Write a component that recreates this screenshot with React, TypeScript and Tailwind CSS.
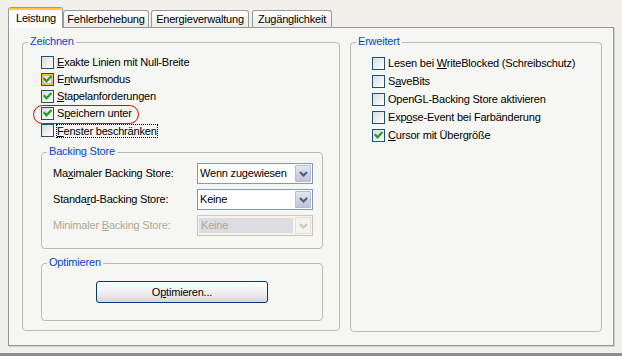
import React from 'react'

const PANEL_BG = 'bg-[#f6f6f3]'

function Check({ checked, hover }: { checked?: boolean; hover?: boolean }) {
  return (
    <span className="relative w-[13px] h-[13px] shrink-0 border border-[#1c5180] bg-gradient-to-br from-[#dcdcd7] to-[#ffffff]">
      {hover && <span className="absolute inset-0 border-2 border-[#f8b84a]" />}
      {checked && (
        <svg width="11" height="11" viewBox="0 0 11 11" className="absolute left-0 top-0">
          <path d="M2.5 5 L4.5 7.3 L8.7 2.8" fill="none" stroke="#21a121" strokeWidth="2.2" strokeLinecap="square" />
        </svg>
      )}
    </span>
  )
}

function Key({ text, at }: { text: string; at: number }) {
  return (
    <>
      {text.slice(0, at)}
      <span className="underline underline-offset-[1px]">{text[at]}</span>
      {text.slice(at + 1)}
    </>
  )
}

function Row({ children, checked, hover, h = 'h-[17px]' }: { children: React.ReactNode; checked?: boolean; hover?: boolean; h?: string }) {
  return (
    <div className={`relative flex items-center ${h}`}>
      <Check checked={checked} hover={hover} />
      <span className="ml-[3px] leading-[13px] whitespace-nowrap">{children}</span>
    </div>
  )
}

function Group({ title, className, children }: { title: string; className?: string; children?: React.ReactNode }) {
  return (
    <div className={`relative border border-[#bcbcb4] rounded-[4px] ${className ?? ''}`}>
      <span className={`absolute left-[5px] -top-[8px] px-[2px] leading-[13px] text-[#0046d5] ${PANEL_BG}`}>{title}</span>
      {children}
    </div>
  )
}

function Chevron({ color }: { color: string }) {
  return (
    <svg width="9" height="6" viewBox="0 0 9 6">
      <path d="M1 1 L4.5 4.5 L8 1" fill="none" stroke={color} strokeWidth="2.2" />
    </svg>
  )
}

function Combo({ value, disabled }: { value: string; disabled?: boolean }) {
  if (disabled) {
    return (
      <div className="flex w-[116px] h-[21px] border border-[#c9c7ba] bg-[#f4f3ee]">
        <div className="flex-1 my-[2px] ml-[1px] pl-[2px] flex items-center bg-[#dcdce2] text-[#aca899] leading-[13px]">{value}</div>
        <div className="w-[16px] my-[1px] mr-[1px] ml-[2px] flex items-center justify-center border border-[#e2e1da] bg-[#f4f3ee]">
          <Chevron color="#c9c7ba" />
        </div>
      </div>
    )
  }
  return (
    <div className="flex w-[116px] h-[21px] border border-[#7f9db9] bg-white">
      <div className="flex-1 pl-[2px] flex items-center leading-[13px]">{value}</div>
      <div className="w-[16px] my-[1px] mr-[1px] flex items-center justify-center border border-[#b6bcd4] rounded-[1px] bg-gradient-to-b from-[#e4e6f2] to-[#c0c2d6]">
        <Chevron color="#4d6185" />
      </div>
    </div>
  )
}

function Tab({ label, w, ml }: { label: string; w: string; ml?: string }) {
  return (
    <div className={`${w} ${ml ?? ''} h-[17px] flex items-center justify-center border border-b-0 border-[#919b9c] rounded-t-[3px] bg-gradient-to-b from-[#ffffff] to-[#ecebe5] leading-[13px]`}>
      {label}
    </div>
  )
}

export default function App() {
  return (
    <div className="w-[622px] h-[356px] bg-[#f1f0ea] border-b-[3px] border-[#8e8e8e] font-['Liberation_Sans',Arial,sans-serif] text-[11px] tracking-[-0.2px] text-black flex flex-col">
      {/* Tabs */}
      <div className="flex items-end h-[27px] pl-[8px]">
        <div className="relative z-10 w-[55px] h-[21px] -mb-[1px] border-x border-[#919b9c] rounded-t-[3px] bg-[#fcfcfb] overflow-hidden">
          <div className="h-[1px] bg-[#e68b2c]" />
          <div className="h-[2px] bg-[#ffc73c]" />
          <div className="pl-[7px] pt-[2px] leading-[13px]">Leistung</div>
        </div>
        <Tab label="Fehlerbehebung" w="w-[86px]" />
        <Tab label="Energieverwaltung" w="w-[98px]" ml="ml-[2px]" />
        <Tab label="Zugänglichkeit" w="w-[80px]" ml="ml-[3px]" />
      </div>

      {/* Panel */}
      <div className={`ml-[8px] w-[606px] h-[319px] border border-[#919b9c] shadow-[1px_1px_0_#d2d1c9] ${PANEL_BG} flex gap-[10px] pl-[13px] pt-[14px]`}>
        <Group title="Zeichnen" className="w-[318px] h-[289px]">
          <div className="pl-[18px] pt-[11px]">
            <Row><Key text="Exakte Linien mit Null-Breite" at={0} /></Row>
            <Row checked hover><Key text="Entwurfsmodus" at={1} /></Row>
            <Row checked><Key text="Stapelanforderungen" at={0} /></Row>
            <Row checked>
              <Key text="Speichern unter" at={1} />
              <span className="absolute -left-[8px] top-0 w-[106px] h-[19px] border border-[#e00000] rounded-full" />
            </Row>
            <div className="flex items-center h-[17px]">
              <Check />
              <span className="ml-[2px] border border-dotted border-black leading-[12px] whitespace-nowrap">
                <Key text="Fenster beschränken" at={0} />
              </span>
            </div>

            <Group title="Backing Store" className="mt-[13px] w-[282px]">
              <div className="pt-[10px] pb-[12px] pl-[11px] flex flex-col gap-[5px]">
                <div className="flex items-center">
                  <span className="w-[144px]"><Key text="Maximaler Backing Store:" at={2} /></span>
                  <Combo value="Wenn zugewiesen" />
                </div>
                <div className="flex items-center">
                  <span className="w-[144px]"><Key text="Standard-Backing Store:" at={6} /></span>
                  <Combo value="Keine" />
                </div>
                <div className="flex items-center">
                  <span className="w-[144px] text-[#aca899]"><Key text="Minimaler Backing Store:" at={10} /></span>
                  <Combo value="Keine" disabled />
                </div>
              </div>
            </Group>

            <Group title="Optimieren" className="mt-[14px] w-[282px]">
              <div className="py-[17px] flex justify-center">
                <button className="w-[172px] h-[22px] border border-[#003c74] rounded-[3px] bg-gradient-to-b from-[#ffffff] via-[#f1f1f4] to-[#d6d6e2] leading-[13px]">
                  <Key text="Optimieren..." at={1} />
                </button>
              </div>
            </Group>
          </div>
        </Group>

        <Group title="Erweitert" className="w-[252px] h-[290px]">
          <div className="pl-[21px] pt-[11px]">
            <Row h="h-[18px]">Lesen bei <Key text="WriteBlocked" at={0} /> (Schreibschutz)</Row>
            <Row h="h-[18px]"><Key text="SaveBits" at={1} /></Row>
            <Row h="h-[18px]">OpenGL-Backing Store aktivieren</Row>
            <Row h="h-[18px]"><Key text="Expose-Event bei Farbänderung" at={3} /></Row>
            <Row h="h-[18px]" checked><Key text="Cursor mit Übergröße" at={0} /></Row>
          </div>
        </Group>
      </div>
    </div>
  )
}
